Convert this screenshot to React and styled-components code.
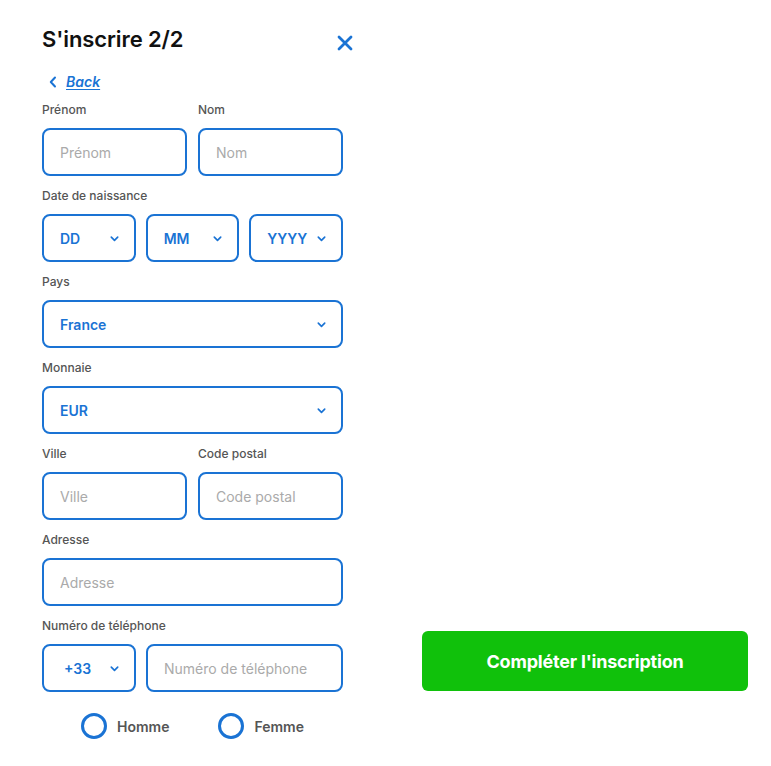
import React from 'react'
import styled, { createGlobalStyle } from 'styled-components'

const BLUE = '#1a73d4'

const GlobalStyle = createGlobalStyle`
  body {
    margin: 0;
    background: #fff;
    font-family: Inter, "Noto Sans", sans-serif;
  }
`

const Chevron = ({ size = 11 }) => (
  <svg width={size} height={size} viewBox="0 0 12 12" fill="none">
    <path d="M2.5 4.5 6 8l3.5-3.5" stroke={BLUE} strokeWidth="1.8" strokeLinecap="round" strokeLinejoin="round" />
  </svg>
)

const Field = ({ label, children }) => (
  <FieldBox>
    <Label>{label}</Label>
    {children}
  </FieldBox>
)

const Select = ({ value }) => (
  <SelectBox>
    <span>{value}</span>
    <Chevron />
  </SelectBox>
)

const App = () => {
  return (
    <Page>
      <GlobalStyle />
      <Form>
        <Header>
          <Title>S'inscrire 2/2</Title>
          <Close>
            <svg width="16" height="16" viewBox="0 0 16 16">
              <path d="M2 2l12 12M14 2 2 14" stroke={BLUE} strokeWidth="2.8" strokeLinecap="round" />
            </svg>
          </Close>
        </Header>
        <BackLink>
          <svg width="10" height="12" viewBox="0 0 10 12">
            <path d="M7 1.5 2.8 6 7 10.5" stroke={BLUE} strokeWidth="2" fill="none" strokeLinecap="round" strokeLinejoin="round" />
          </svg>
          <span>Back</span>
        </BackLink>

        <Row>
          <Field label="Prénom"><Input placeholder="Prénom" /></Field>
          <Field label="Nom"><Input placeholder="Nom" /></Field>
        </Row>

        <Field label="Date de naissance">
          <Triple>
            <Select value="DD" />
            <Select value="MM" />
            <Select value="YYYY" />
          </Triple>
        </Field>

        <Field label="Pays"><Select value="France" /></Field>
        <Field label="Monnaie"><Select value="EUR" /></Field>

        <Row>
          <Field label="Ville"><Input placeholder="Ville" /></Field>
          <Field label="Code postal"><Input placeholder="Code postal" /></Field>
        </Row>

        <Field label="Adresse"><Input placeholder="Adresse" /></Field>

        <Field label="Numéro de téléphone">
          <PhoneRow>
            <Select value="+33" />
            <Input placeholder="Numéro de téléphone" />
          </PhoneRow>
        </Field>

        <Radios>
          <RadioItem><Circle />Homme</RadioItem>
          <RadioItem><Circle />Femme</RadioItem>
        </Radios>
      </Form>

      <Side>
        <SubmitButton>Compléter l'inscription</SubmitButton>
      </Side>
    </Page>
  )
}

const Page = styled.div`
  display: flex;
  padding: 0 23px 0 42px;
  gap: 79px;
  width: 771px;
  box-sizing: border-box;
`

const Form = styled.div`
  width: 301px;
  display: flex;
  flex-direction: column;
  padding-top: 26px;
`

const Header = styled.div`
  display: flex;
  align-items: center;
  justify-content: space-between;
  width: 311px;
  height: 26px;
`

const Title = styled.h1`
  margin: 0;
  font-size: 22px;
  font-weight: 600;
  color: #111;
  letter-spacing: -0.1px;
`

const Close = styled.div`
  display: flex;
  padding-top: 7px;
`

const BackLink = styled.a`
  display: flex;
  align-items: center;
  gap: 8px;
  margin-top: 21px;
  margin-left: 6px;
  color: ${BLUE};
  font-size: 14px;
  font-weight: 600;
  font-style: italic;
  span {
    text-decoration: underline;
    text-underline-offset: 2px;
  }
`

const FieldBox = styled.div`
  display: flex;
  flex-direction: column;
  flex: 1;
  min-width: 0;
`

const Label = styled.label`
  font-size: 12px;
  font-weight: 500;
  color: #555;
  line-height: 16px;
  margin-top: 12px;
  margin-bottom: 10px;
`

const Row = styled.div`
  display: flex;
  gap: 11px;
  &:first-of-type ${Label} {
    margin-top: 4px;
  }
`

const Input = styled.input`
  height: 48px;
  box-sizing: border-box;
  border: 2px solid ${BLUE};
  border-radius: 8px;
  padding: 0 16px;
  font-family: inherit;
  font-size: 14px;
  width: 100%;
  outline: none;
  &::placeholder {
    color: #aaa;
  }
`

const SelectBox = styled.div`
  height: 48px;
  box-sizing: border-box;
  border: 2px solid ${BLUE};
  border-radius: 8px;
  padding: 0 14px 0 16px;
  display: flex;
  align-items: center;
  justify-content: space-between;
  color: ${BLUE};
  font-size: 14px;
  font-weight: 600;
`

const Triple = styled.div`
  display: grid;
  grid-template-columns: repeat(3, 1fr);
  gap: 10px;
`

const PhoneRow = styled.div`
  display: grid;
  grid-template-columns: 94px 1fr;
  gap: 10px;
  ${SelectBox} {
    padding-left: 20px;
  }
`

const Radios = styled.div`
  display: flex;
  justify-content: center;
  gap: 49px;
  margin-top: 21px;
`

const RadioItem = styled.label`
  display: flex;
  align-items: center;
  gap: 10px;
  font-size: 14px;
  font-weight: 600;
  color: #555;
`

const Circle = styled.span`
  width: 26px;
  height: 26px;
  box-sizing: border-box;
  border: 3px solid ${BLUE};
  border-radius: 50%;
`

const Side = styled.div`
  flex: 1;
  display: flex;
  flex-direction: column;
  justify-content: flex-end;
  padding-bottom: 48px;
`

const SubmitButton = styled.button`
  height: 60px;
  border: none;
  border-radius: 6px;
  background: #10c10b;
  color: #fff;
  font-family: inherit;
  font-size: 18px;
  font-weight: 700;
  letter-spacing: -0.2px;
`

export default App
